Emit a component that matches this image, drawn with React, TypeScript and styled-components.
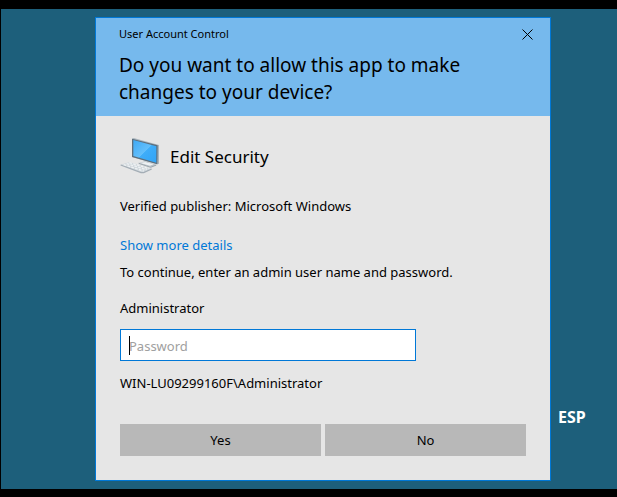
import React from "react";
import styled, { createGlobalStyle } from "styled-components";

const GlobalStyle = createGlobalStyle`
  * { box-sizing: border-box; }
  body {
    margin: 0;
    background: #000;
    color: #000;
    font-family: "Noto Sans", "Open Sans", sans-serif;
    font-size: 13px;
    line-height: 20px;
  }
  button, input { font: inherit; color: inherit; }
`;

const Screen = styled.div`
  min-height: 100vh;
  padding: 9px 0 8px 1px;
  display: flex;
`;

const Desktop = styled.main`
  flex: 1;
  display: flex;
  align-items: flex-start;
  padding: 8px 0 8px 94px;
  background: #1d5f7b;
`;

const Dialog = styled.section`
  flex: 1;
  border: 1px solid #0078d7;
  background: #e6e6e6;
`;

const Header = styled.header`
  padding: 6px 12px 10px 23px;
  background: #76b9ed;
`;

const TitleBar = styled.div`
  display: flex;
  align-items: center;
  justify-content: space-between;
  height: 20px;
  font-size: 11px;
`;

const CloseButton = styled.button`
  display: grid;
  place-items: center;
  width: 21px;
  height: 20px;
  padding: 0;
  border: 0;
  background: transparent;
`;

const Question = styled.h1`
  max-width: 360px;
  margin: 8px 0 0;
  font-size: 19px;
  line-height: 27px;
  font-weight: 400;
`;

const Body = styled.form`
  display: flex;
  flex-direction: column;
  align-items: flex-start;
  padding: 20px 24px 24px;
`;

const AppRow = styled.div`
  display: flex;
  align-items: center;
  gap: 10px;
  height: 42px;
`;

const AppName = styled.h2`
  margin: 0;
  font-size: 17px;
  line-height: 24px;
  font-weight: 400;
`;

const Line = styled.p<{ $gap: number }>`
  margin: ${(p) => p.$gap}px 0 0;
`;

const DetailsLink = styled.a`
  margin-top: 19px;
  color: #0078d7;
  text-decoration: none;
`;

const UserLabel = styled.label`
  margin-top: 16px;
`;

const Field = styled.div`
  position: relative;
  width: 73%;
  margin-top: 11px;
`;

const PasswordInput = styled.input`
  display: block;
  width: 100%;
  height: 32px;
  padding: 2px 8px 0;
  border: 1px solid #0078d7;
  border-radius: 0;
  outline: 0;
  background: #fff;
  caret-color: transparent;
  &::placeholder { color: #a0a0a0; opacity: 1; }
`;

const Caret = styled.span`
  position: absolute;
  left: 9px;
  top: 7px;
  width: 1px;
  height: 19px;
  background: #000;
`;

const Actions = styled.div`
  display: grid;
  grid-template-columns: 1fr 1fr;
  gap: 4px;
  width: 100%;
  margin-top: 31px;
`;

const ActionButton = styled.button`
  height: 32px;
  padding: 0;
  border: 0;
  background: #b8b8b8;
`;

const Side = styled.aside`
  width: 66px;
  padding: 390px 0 0 7px;
`;

const LanguageButton = styled.button`
  display: block;
  padding: 0;
  border: 0;
  background: transparent;
  color: #fff;
  font-size: 16px;
  line-height: 20px;
  font-weight: 700;
`;

const ComputerIcon = () => (
  <svg width="40" height="40" viewBox="0 0 120 120" aria-hidden="true">
    <defs>
      <linearGradient id="glass" x1="0" y1="0" x2="1" y2="1">
        <stop offset="0" stopColor="#3fa9f4" />
        <stop offset="0.5" stopColor="#62bffc" />
        <stop offset="0.52" stopColor="#3eadf9" />
        <stop offset="1" stopColor="#32a4f6" />
      </linearGradient>
    </defs>
    <path d="M56 78 L76 73 L109 83 L92 90 Z" fill="#b9c3ca" />
    <path d="M60 78 L76 75 L101 82 L90 86 Z" fill="#eef1f3" />
    <path d="M56 79 L92 91 L109 84" fill="none" stroke="#98a3ab" strokeWidth="3" />
    <path d="M36 5 L41 3 L117 24 L117 80 L112 82 L36 60 Z" fill="#aab5bd" />
    <path d="M36 5 L113 25 L112 82 L36 60 Z" fill="#5d6e7c" />
    <path d="M40 9 L109 28 L109 77 L40 57 Z" fill="url(#glass)" />
    <path d="M2 83 L29 75 L95 95 L71 107 L63 107 Z" fill="#d0d7dc" />
    <path d="M2 84 L63 107 L71 107 L95 96" fill="none" stroke="#a4adb5" strokeWidth="4" />
    <path
      d="M11 83 L71 102 M20 80 L80 98 M28 77 L88 95"
      fill="none"
      stroke="#eef1f3"
      strokeWidth="4"
      strokeDasharray="8 4"
    />
  </svg>
);

export default function App() {
  return (
    <>
      <GlobalStyle />
      <Screen>
        <Desktop>
          <Dialog role="dialog" aria-labelledby="question">
            <Header>
              <TitleBar>
                <span>User Account Control</span>
                <CloseButton type="button" aria-label="Close">
                  <svg width="11" height="11" viewBox="0 0 11 11" aria-hidden="true">
                    <path d="M0.5 0.5 L10.5 10.5 M10.5 0.5 L0.5 10.5" stroke="#000" fill="none" />
                  </svg>
                </CloseButton>
              </TitleBar>
              <Question id="question">
                Do you want to allow this app to make changes to your device?
              </Question>
            </Header>
            <Body onSubmit={(e) => e.preventDefault()}>
              <AppRow>
                <ComputerIcon />
                <AppName>Edit Security</AppName>
              </AppRow>
              <Line $gap={18}>Verified publisher: Microsoft Windows</Line>
              <DetailsLink href="#details">Show more details</DetailsLink>
              <Line $gap={7}>To continue, enter an admin user name and password.</Line>
              <UserLabel htmlFor="password">Administrator</UserLabel>
              <Field>
                <PasswordInput id="password" type="password" placeholder="Password" />
                <Caret />
              </Field>
              <Line $gap={12}>WIN-LU09299160F\Administrator</Line>
              <Actions>
                <ActionButton type="submit">Yes</ActionButton>
                <ActionButton type="button">No</ActionButton>
              </Actions>
            </Body>
          </Dialog>
          <Side>
            <LanguageButton type="button">ESP</LanguageButton>
          </Side>
        </Desktop>
      </Screen>
    </>
  );
}
